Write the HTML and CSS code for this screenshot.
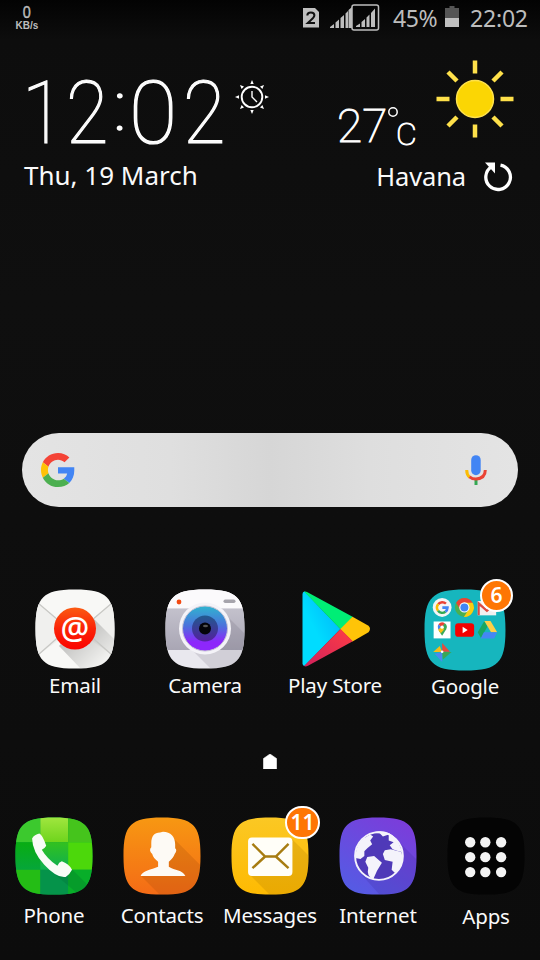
FILE: index.html
```html
<!DOCTYPE html>
<html lang="en">
<head>
<meta charset="utf-8">
<title>Home</title>
<link rel="stylesheet" href="styles.css">
</head>
<body>
<svg class="defs" width="0" height="0">
  <defs>
    <clipPath id="sq"><path d="M40 .5C57 .5 66 2.500 71.700 8.300C77.500 14 79.500 23 79.500 40C79.500 57 77.500 66 71.700 71.700C66 77.500 57 79.500 40 79.500C23 79.500 14 77.500 8.300 71.700C2.500 66 .5 57 .5 40C.5 23 2.500 14 8.300 8.300C14 2.500 23 .5 40 .5Z"/></clipPath>
    <linearGradient id="gRed" x1="0" y1="0" x2="0" y2="1"><stop offset="0" stop-color="#fb5a12"/><stop offset=".5" stop-color="#fb2407"/><stop offset="1" stop-color="#fa0300"/></linearGradient>
    <linearGradient id="gLens" x1="0" y1="0" x2="0" y2="1"><stop offset="0" stop-color="#2fb4cf"/><stop offset=".45" stop-color="#4c70dc"/><stop offset=".8" stop-color="#8d27fb"/></linearGradient>
    <linearGradient id="gLens2" x1="0" y1="0" x2="0" y2="1"><stop offset="0" stop-color="#215a8f"/><stop offset="1" stop-color="#54209e"/></linearGradient>
    <linearGradient id="gCam" x1="0" y1="0" x2="0" y2="1"><stop offset="0" stop-color="#c3c1cc"/><stop offset="1" stop-color="#a9a6b4"/></linearGradient>
    <linearGradient id="gBlue" x1="1" y1="0" x2="0" y2="1"><stop offset="0" stop-color="#00b0f8"/><stop offset=".6" stop-color="#00dcff"/></linearGradient>
    <linearGradient id="gPlayRed" x1="1" y1="0" x2="0" y2="1"><stop offset="0" stop-color="#ff3d44"/><stop offset="1" stop-color="#d0215c"/></linearGradient>
    <linearGradient id="gOrange" x1="0" y1="0" x2="0" y2="1"><stop offset="0" stop-color="#f79812"/><stop offset="1" stop-color="#f46b16"/></linearGradient>
    <linearGradient id="gYellow" x1="0" y1="0" x2="0" y2="1"><stop offset="0" stop-color="#fbc824"/><stop offset="1" stop-color="#feba02"/></linearGradient>
    <linearGradient id="gPurple" x1=".8" y1="0" x2=".2" y2="1"><stop offset="0" stop-color="#7c3cda"/><stop offset="1" stop-color="#545ce4"/></linearGradient>
    <linearGradient id="gShade" x1=".3" y1=".3" x2=".9" y2=".9"><stop offset="0" stop-color="#000" stop-opacity=".22"/><stop offset="1" stop-color="#000" stop-opacity="0"/></linearGradient>
    <linearGradient id="gG1" x1="0" y1="0" x2="0" y2="1"><stop offset="0" stop-color="#08ad12"/><stop offset="1" stop-color="#06a63a"/></linearGradient>
    <linearGradient id="gG2" x1="0" y1="0" x2="0" y2="1"><stop offset="0" stop-color="#32c11f"/><stop offset="1" stop-color="#0eaf50"/></linearGradient>
    <linearGradient id="gG3" x1="0" y1="0" x2="0" y2="1"><stop offset="0" stop-color="#a1e63f"/><stop offset="1" stop-color="#6ed41c"/></linearGradient>
  </defs>
</svg>

<div class="screen">
  <header class="status">
    <div class="rate"><span class="rate-n">0</span><span class="rate-u">KB/s</span></div>
    <svg class="sim" width="16" height="20" viewBox="0 0 16 20"><path d="M0 0H12L16 4V19.500H0Z" fill="#c0c0c0"/><path d="M4.300 7.500Q4.300 4.500 7.900 4.500Q11.400 4.500 11.400 7.300Q11.400 9.300 8 12L4.800 15H12" fill="none" stroke="#111" stroke-width="2"/></svg>
    <svg class="signal" width="50" height="28" viewBox="0 0 50 28">
      <g fill="#bdbdbd"><path d="M0 24V23L4 20V24ZM5.500 24V18.500L9 15.500V24ZM10.500 24V14L14 11V24ZM15.500 24V9.500L18 7V24ZM18.500 24V6L22 3V24Z"/><path d="M26 23V22L30 19.500V23ZM31.500 23V18L35 15V23ZM36.500 23V13.500L39.500 10.500V23ZM41 23V9L45 4.500V23Z"/></g>
      <rect x="22" y="1" width="26.500" height="25" rx="2" fill="none" stroke="#bdbdbd" stroke-width="1.500"/>
    </svg>
    <span class="pct">45%</span>
    <svg class="batt" width="14" height="21" viewBox="0 0 14 21"><path d="M4.500 0H9.500V2H14V12H0V2H4.500Z" fill="#555"/><path d="M0 12H14V21H0Z" fill="#c0c0c0"/></svg>
    <span class="time">22:02</span>
  </header>

  <section class="widget">
    <div class="left">
      <div class="clock">
        <span class="slim">1</span><span class="slim">2</span><span class="colon">:</span><span>0</span><span class="slim">2</span>
        <svg class="alarm" width="36" height="36" viewBox="-18 -18 36 36">
          <circle r="10.300" fill="none" stroke="#fff" stroke-width="1.900"/><path d="M0-6V0L5 5" fill="none" stroke="#fff" stroke-width="1.400"/>
          <g fill="#fff"><path id="ray" d="M0-17L1.700-13H-1.700Z"/><use href="#ray" transform="rotate(45)"/><use href="#ray" transform="rotate(90)"/><use href="#ray" transform="rotate(135)"/><use href="#ray" transform="rotate(180)"/><use href="#ray" transform="rotate(225)"/><use href="#ray" transform="rotate(270)"/><use href="#ray" transform="rotate(315)"/></g>
        </svg>
      </div>
      <div class="date">Thu, 19 March</div>
    </div>
    <div class="right">
      <div class="weather">
        <span class="temp">27</span>
        <svg class="deg" width="12" height="12" viewBox="0 0 12 12"><circle cx="6" cy="6" r="4.200" fill="none" stroke="#fff" stroke-width="1.500"/></svg>
        <span class="unit">C</span>
        <svg class="sun" width="78" height="78" viewBox="-39 -39 78 78"><circle r="18.500" fill="#fbd604" stroke="#fee14c" stroke-width="1.500"/><g stroke="#fee04a" stroke-width="4.500"><path d="M0-38.500V-25.500M0 25.500V38.500M-38.500 0H-25.500M25.500 0H38.500M-27-27L-18-18M27-27L18-18M-27 27L-18 18M27 27L18 18"/></g></svg>
      </div>
      <div class="city"><span>Havana</span>
        <svg width="30" height="30" viewBox="0 0 30 30"><path d="M17.500 3.100A12.300 12.300 0 1 1 8.800 4.600" fill="none" stroke="#fff" stroke-width="3.300"/><path d="M2 .5H12V11.500Z" fill="#fff"/></svg>
      </div>
    </div>
  </section>

  <section class="search">
    <svg width="34" height="34" viewBox="0 0 48 48"><path fill="#f44336" d="M24 9.500c3.540 0 6.710 1.220 9.210 3.600l6.850-6.850C35.900 2.380 30.470 0 24 0 14.620 0 6.510 5.380 2.560 13.220l7.980 6.190C12.430 13.720 17.740 9.500 24 9.500z"/><path fill="#4285f4" d="M46.980 20H24V29H36.940c-.58 2.960-2.260 5.480-4.780 7.180l7.730 6C44.400 38 46.980 31.840 46.980 24.550z"/><path fill="#ffc107" d="M10.530 28.590c-.48-1.450-.76-2.990-.76-4.590s.27-3.140.76-4.590l-7.980-6.190C.92 16.460 0 20.120 0 24c0 3.880.92 7.540 2.560 10.780l7.970-6.190z"/><path fill="#4caf50" d="M24 48c6.480 0 11.930-2.130 15.890-5.810l-7.730-6c-2.150 1.450-4.920 2.300-8.160 2.300-6.260 0-11.570-4.220-13.470-9.910l-7.980 6.190C6.510 42.620 14.620 48 24 48z"/></svg>
    <svg width="22" height="31" viewBox="0 0 22 31"><rect x="6.200" y=".2" width="9.500" height="20" rx="4.750" fill="#4285f4"/><path d="M9.500 24H12.500V30H9.500Z" fill="#34a853"/><path d="M1.700 15Q1.700 20 4.800 22.300" fill="none" stroke="#fbbc05" stroke-width="3"/><path d="M4.500 21.800Q7.200 24 11 24Q20.300 23.500 20.300 15" fill="none" stroke="#ea4335" stroke-width="3"/></svg>
  </section>

  <section class="apps">
    <div class="app">
      <svg width="80" height="80" viewBox="0 0 80 80"><g clip-path="url(#sq)"><path d="M0 0H80V80H0Z" fill="#f8f8f6"/><path d="M0 12L40 43L80 12V68L40 40L0 68Z" fill="#f0f0ee"/><path d="M54 25L80 51V80H46L24 57Z" fill="url(#gShade)"/><path d="M3 14L30 37M77 14L50 37M3 66L28 44M77 66L52 44" stroke="#c8c8c5" stroke-width="1.300"/></g><circle cx="40" cy="39.500" r="21" fill="url(#gRed)"/></svg>
      <span class="at">@</span>
      <span class="label">Email</span>
    </div>
    <div class="app">
      <svg width="80" height="80" viewBox="0 0 80 80"><g clip-path="url(#sq)"><path d="M0 0H80V80H0Z" fill="#e9e8ee"/><path d="M0 0H80V19.500H0Z" fill="#fbfafc"/><path d="M0 19.500H80V61H0Z" fill="url(#gCam)"/><path d="M58 23L80 45V80H46L24 58Z" fill="#555064" opacity=".16"/></g><circle cx="14" cy="13" r="2.400" fill="#f34a12"/><rect x="58.500" y="10.500" width="12" height="3.500" rx="1.700" fill="#a6a4ac"/><circle cx="40" cy="39.500" r="26" fill="#f4f3f8"/><circle cx="40" cy="39.500" r="22.500" fill="url(#gLens)" stroke="#c5c3d5" stroke-width="1"/><circle cx="40" cy="39.500" r="13" fill="url(#gLens2)"/><circle cx="40" cy="39.500" r="6" fill="#04040a"/><ellipse cx="40.500" cy="37" rx="2.500" ry="1.200" fill="#555"/></svg>
      <span class="label">Camera</span>
    </div>
    <div class="app">
      <svg width="80" height="80" viewBox="0 0 80 80"><path d="M7.500 5Q7.500 3 9.500 2.600L45.500 40L9.500 77Q7.500 76.500 7.500 74.500Z" fill="url(#gBlue)"/><path d="M9 2.600Q10.700 2 12.500 3.200L58 28L45.500 40.300Z" fill="#00ee76"/><path d="M57.500 27.800L73.500 36.800Q76.500 39.800 73.500 43.200L57.500 52.500L45 40.200Z" fill="#ffc408"/><path d="M57.800 52.300L13 76.800Q10.500 78 9 77L45.500 40Z" fill="url(#gPlayRed)"/></svg>
      <span class="label">Play Store</span>
    </div>
    <div class="app folder">
      <svg width="82" height="82" viewBox="0 0 80 80"><g clip-path="url(#sq)"><path d="M0 0H80V80H0Z" fill="#16b6be"/></g>
        <g transform="translate(-.6 -.3)">
        <circle cx="18.300" cy="18.300" r="9.200" fill="#f5f5f5"/><g fill="none" stroke-width="2.500"><path d="M14.500 15A5.300 5.300 0 0 1 22 14.600" stroke="#ea4335"/><path d="M14.500 15A5.300 5.300 0 0 0 14.300 21.500" stroke="#fbbc05"/><path d="M14.300 21.500A5.300 5.300 0 0 0 21.500 22.500" stroke="#34a853"/><path d="M18.500 18.500H23.500A5.300 5.300 0 0 1 21.500 22.500" stroke="#4285f4"/></g>
        <circle cx="40" cy="18.300" r="9.200" fill="#4aaf50"/><path d="M32 13.700A9.200 9.200 0 0 1 48 13.700L40 18.300Z" fill="#e94335"/><path d="M32 13.700L36 20.600L40 14Z" fill="#e94335"/><path d="M40 13.700H48A9.200 9.200 0 0 1 39.500 27.500L44 20.600Z" fill="#fbcd12"/><circle cx="40" cy="18.300" r="5" fill="#fff"/><circle cx="40" cy="18.300" r="3.900" fill="#4285f4"/>
        <path d="M53 12H71V26H53Z" fill="#f2f0f0"/><path d="M53 12L62 20L71 12V15L62 23L55 17V26H53Z" fill="#de4b42"/>
        <path d="M10 32H26.500V48.500H10Z" fill="#fff"/><path d="M18.300 45L14.300 39.200A4.700 4.700 0 0 1 14.700 34.800L18.300 38Z" fill="#4285f4"/><path d="M14.700 34.800A4.700 4.700 0 0 1 21 33.700L18.300 38Z" fill="#e94335"/><path d="M21 33.700A4.700 4.700 0 0 1 22.300 39.500L18.300 46L15 41Z" fill="#3aaa58"/><path d="M14.300 40L19 36L20 40L17 43.500Z" fill="#fbc213"/><circle cx="18.300" cy="37.600" r="1.600" fill="#fff"/>
        <rect x="31" y="33.700" width="18.500" height="13.200" rx="3" fill="#f50000"/><path d="M38.300 37.200L43.200 40.300L38.300 43.400Z" fill="#fff"/>
        <path d="M59.500 31.500L53 42.500L56.200 48L62.500 37Z" fill="#18a760"/><path d="M59.500 31.500H65.500L72 42.500H66Z" fill="#ffcf48"/><path d="M59 42.500H72L69 48.500H56Z" fill="#4587f4"/>
        <path d="M18.300 53L26 61.500H18.300Z" fill="#e74a3c"/><path d="M27.500 61.800L19 69L18.300 61.800Z" fill="#3aa757"/><path d="M18.300 61.800V71.500L11 63.500Z" fill="#4d89ee"/><path d="M9.500 61.800L16 56L18.300 61.800Z" fill="#f6bd15"/><circle cx="18.300" cy="61.500" r="1.300" fill="#fff"/>
        </g>
      </svg>
      <span class="badge">6</span>
      <span class="label">Google</span>
    </div>
  </section>

  <div class="pager"><svg width="14" height="15" viewBox="0 0 14 15"><path d="M7 0L13.500 4.500V15H.5V4.500Z" fill="#fff" stroke="#fff" stroke-width=".6"/></svg></div>

  <nav class="dock">
    <div class="app">
      <svg width="78" height="78" viewBox="0 0 80 80"><g clip-path="url(#sq)"><path d="M0 0H80V80H0Z" fill="#0ba33d"/><path d="M0 0H26V26H0Z" fill="#3cc92e"/><path d="M26 0H54.500V26H26Z" fill="url(#gG3)"/><path d="M54.500 0H80V26H54.500Z" fill="#45c41c"/><path d="M0 26H26V54H0Z" fill="url(#gG1)"/><path d="M26 26H54.500V54H26Z" fill="url(#gG2)"/><path d="M54.500 26H80V54H54.500Z" fill="#4cd80b"/><path d="M0 54H26V80H0Z" fill="#24bd15"/><path d="M26 54H54.500V80H26Z" fill="#05934a"/><path d="M54.500 54H80V80H54.500Z" fill="#08ae29"/><path d="M59 54L80 75V80H66L40 58Z" fill="#00672e" opacity=".25"/></g><path d="M17.500 22Q20 18 25 17Q28 18 32 29.500Q30.500 32.500 27.500 33.500Q33 43 43.500 50Q45 46.500 48 45.500Q55 48 58.500 54Q56 59 52 61.500Q43 63 30 49Q18 36 17.500 22Z" fill="#f8fcf6"/></svg>
      <span class="label">Phone</span>
    </div>
    <div class="app">
      <svg width="78" height="78" viewBox="0 0 80 80"><g clip-path="url(#sq)"><path d="M0 0H80V80H0Z" fill="url(#gOrange)"/><path d="M53 23L80 50V80H38L18 60L44 50Z" fill="#8c3b08" opacity=".18"/></g><path d="M41 15C49 15 53.500 20 53.500 28V32Q56 34 53 38Q52 41.500 47 46V51C53 55 61 54 64 60.500H18C20 55 29 54 36 51V46Q31 42 30 38Q26 34 29 31V27C29 20 32 16 38 16Z" fill="#fdfaf5"/></svg>
      <span class="label">Contacts</span>
    </div>
    <div class="app">
      <svg width="78" height="78" viewBox="0 0 80 80"><g clip-path="url(#sq)"><path d="M0 0H80V80H0Z" fill="url(#gYellow)"/><path d="M62 22L80 40V80H40L18 58Z" fill="#9a6800" opacity=".2"/></g><rect x="17.500" y="21" width="45.500" height="39.500" rx="4" fill="#fffef8"/><path d="M22 27.500L35 40.500H46L59 27.500M22 52.500L35 40.500M46 40.500L59 52.500" fill="none" stroke="#a77c11" stroke-width="2.500"/></svg>
      <span class="badge">11</span>
      <span class="label">Messages</span>
    </div>
    <div class="app">
      <svg width="78" height="78" viewBox="0 0 80 80"><g clip-path="url(#sq)"><path d="M0 0H80V80H0Z" fill="url(#gPurple)"/><path d="M58 22L80 44V80H42L22 58Z" fill="#30208c" opacity=".18"/></g><circle cx="41" cy="40" r="24.500" fill="#4f39b8" stroke="#f4f3fb" stroke-width="2"/><g fill="#f4f3fb"><path d="M17 39Q18 28 25 22L32 18L35 20L32 24L34 28L29 32L26 35V40L22 43L17 42Z"/><path d="M29 41L36 40L44 47L39 55L35 64Q28 61 30 52L27 46Z"/><path d="M34 16Q50 11 60 24L65 36L61 35L55 33L52 29L56 26L51 24V18L45 20L42 17Z"/><path d="M47 34L53 33L64 36Q68 47 58 58L54 54L55 46L47 44L45 38Z"/></g></svg>
      <span class="label">Internet</span>
    </div>
    <div class="app drawer">
      <svg width="78" height="78" viewBox="0 0 80 80"><g clip-path="url(#sq)"><path d="M0 0H80V80H0Z" fill="#040404"/></g><g fill="#f4f4f4"><circle cx="23.800" cy="25.900" r="5.300"/><circle cx="39.300" cy="25.900" r="5.300"/><circle cx="55.500" cy="25.900" r="5.300"/><circle cx="23.800" cy="41.200" r="5.300"/><circle cx="39.300" cy="41.200" r="5.300"/><circle cx="55.500" cy="41.200" r="5.300"/><circle cx="23.800" cy="56.500" r="5.300"/><circle cx="39.300" cy="56.500" r="5.300"/><circle cx="55.500" cy="56.500" r="5.300"/></g></svg>
      <span class="label">Apps</span>
    </div>
  </nav>
</div>
</body>
</html>
```
FILE: styles.css
```css
* { box-sizing: border-box; }
body { margin: 0; background: #0c0c0c; }
svg { display: block; flex: none; }
.defs { position: absolute; }
.screen {
  width: 540px; height: 960px; overflow: hidden;
  display: flex; flex-direction: column;
  background: linear-gradient(#030303, #0d0d0d 40px, #0f0f0f 300px, #0c0c0c);
  color: #fafafa;
  font-family: "Noto Sans", "Open Sans", sans-serif;
}
.status { height: 37px; display: flex; align-items: flex-start; color: #bdbdbd; padding-left: 15px; flex: none; }
.rate { width: 24px; display: flex; flex-direction: column; align-items: center; font-family: "Liberation Sans", sans-serif; padding-top: 4px; }
.rate-n { font-size: 17px; line-height: 18px; transform: scaleX(.85); -webkit-text-stroke: .4px #bdbdbd; }
.rate-u { font-size: 10px; line-height: 10px; font-weight: bold; margin-top: -1px; }
.sim { margin: 8px 0 0 264px; }
.signal { margin: 4px 0 0 11px; }
.pct { width: 52px; margin-left: 13px; font-size: 23px; line-height: 37px; letter-spacing: -.4px; white-space: nowrap; }
.batt { margin-top: 6px; }
.time { margin-left: 11px; font-size: 23px; line-height: 37px; letter-spacing: -.2px; }

.widget { height: 396px; display: flex; justify-content: space-between; padding: 23px 26px 0 24px; flex: none; }
.clock { height: 94px; display: grid; grid-template-columns: 38px 50px 16px 50px 52px 43px; justify-items: center; font: 100 88px/105px Roboto, sans-serif; -webkit-text-stroke: 1.2px #fff; }
.clock .slim { transform: scaleX(.88); }
.clock .colon { transform: translateY(-6px) scale(.85, .78); -webkit-text-stroke: 2px #fff; }
.alarm { margin-top: 19px; }
.date { font-size: 26px; line-height: 43px; white-space: nowrap; }
.right { width: 177px; }
.weather { height: 94px; display: flex; }
.temp { font: 100 46px/47px Roboto, sans-serif; -webkit-text-stroke: 1px #fff; margin-top: 43px; width: 50px; }
.deg { margin-top: 46px; }
.unit { font: 100 32px/34px Roboto, sans-serif; -webkit-text-stroke: 1px #fff; margin: 57px 0 0 -3px; width: 40px; }
.city { display: flex; justify-content: flex-end; align-items: center; gap: 17px; font-size: 25.5px; line-height: 45px; margin-right: 1px; letter-spacing: -.15px; }

.search { flex: none; height: 74px; margin: 0 22px; padding: 0 31px 0 19px; border-radius: 37px; display: flex; justify-content: space-between; align-items: center; background: linear-gradient(90deg, #e4e4e4, #dfdfdf 30%, #d6d6d6 50%, #dedede 70%, #e4e4e4); }
.apps { flex: none; display: grid; grid-template-columns: repeat(4, 130px); margin: 82px 10px 0; height: 165px; }
.app { position: relative; display: flex; flex-direction: column; align-items: center; }
.label { font-size: 20.5px; line-height: 28px; margin-top: 2px; white-space: nowrap; letter-spacing: -.17px; }
.at { position: absolute; top: 18px; left: 0; width: 130px; text-align: center; font-size: 32px; line-height: 42px; font-weight: 500; color: #fff; }
.badge { position: absolute; left: 80px; top: -10px; width: 33px; height: 33px; border: 2px solid #fff; border-radius: 17px; background: #fe7604; color: #fff; font-size: 21px; line-height: 29px; text-align: center; font-weight: 600; }
.dock .badge { left: 69px; top: -11px; width: 35px; }
.folder .label { margin-top: 1px; }
.pager { height: 63px; display: flex; justify-content: center; flex: none; }
.dock { display: grid; grid-template-columns: repeat(5, 108px); flex: none; }
.dock .label { margin-top: 6px; }
.dock .drawer .label { margin-top: 7px; }
```
